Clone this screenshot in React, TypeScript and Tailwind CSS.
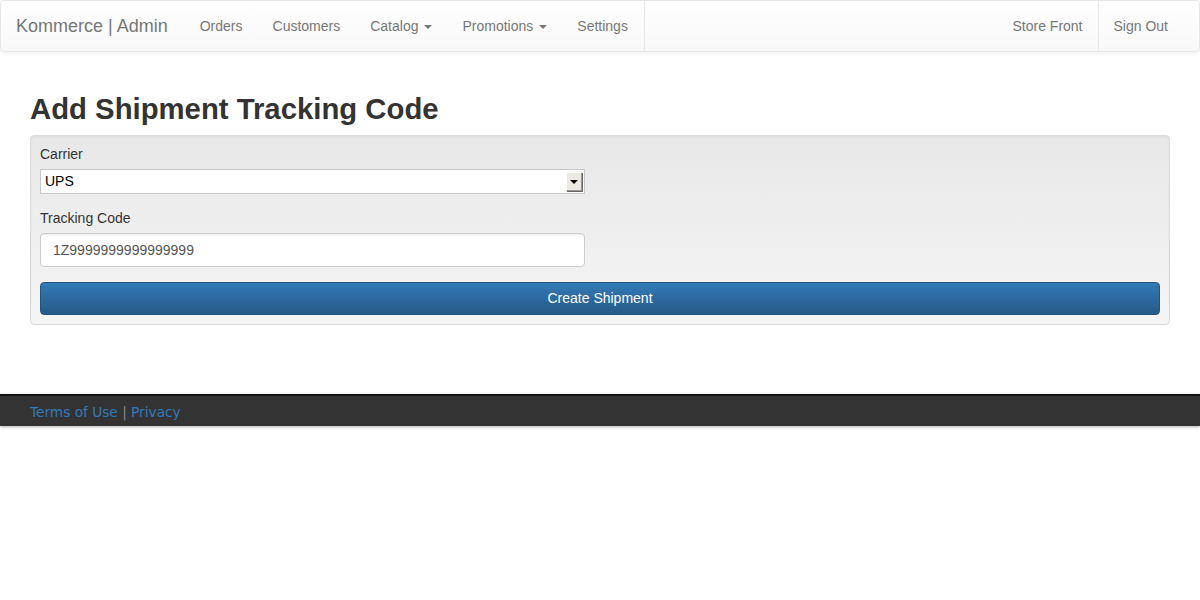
import React from "react";

const Caret = () => (
  <span className="ml-[6px] inline-block h-0 w-0 border-x-[4px] border-t-[4px] border-x-transparent border-t-[#777] align-middle" />
);

export default function App() {
  const navLink = "block px-[15px] py-[15px] leading-[20px] text-[14px] text-[#777]";
  return (
    <div className="min-h-[600px] bg-white text-[14px] text-[#333]" style={{ fontFamily: '"Liberation Sans", Arial, sans-serif' }}>
      <nav className="flex h-[52px] items-stretch rounded-[4px] border border-[#e7e7e7] bg-gradient-to-b from-white to-[#f8f8f8] shadow-[0_1px_5px_rgba(0,0,0,0.075)]">
        <a className="block pl-[15px] pr-[17px] py-[15px] text-[18px] leading-[20px] text-[#777]">Kommerce | Admin</a>
        <ul className="flex border-r border-[#e7e7e7]">
          <li><a className={navLink}>Orders</a></li>
          <li><a className={navLink}>Customers</a></li>
          <li><a className={navLink}>Catalog<Caret /></a></li>
          <li><a className={navLink}>Promotions<Caret /></a></li>
          <li><a className={`${navLink} pr-[16px]`}>Settings</a></li>
        </ul>
        <div className="flex-1" />
        <ul className="mr-[16px] flex">
          <li className="border-r border-[#e7e7e7]"><a className={navLink}>Store Front</a></li>
          <li><a className={navLink}>Sign Out</a></li>
        </ul>
      </nav>

      <div className="px-[30px]">
        <h1 className="mt-[40px] mb-[10px] text-[29.3px] font-bold leading-[33px] text-[#333]">Add Shipment Tracking Code</h1>
        <div className="rounded-[4px] border border-[#dcdcdc] bg-gradient-to-b from-[#e8e8e8] to-[#f5f5f5] px-[9px] pt-[8px] pb-[9px] shadow-[inset_0_1px_3px_rgba(0,0,0,0.05)]">
          <label className="block leading-[20px] text-[14px] text-[#333]">Carrier</label>
          <div className="mt-[5px] flex h-[25px] w-[545px] items-stretch border border-[#c8c8c8] bg-white">
            <span className="flex-1 pl-[4px] leading-[23px] text-[14px] text-black">UPS</span>
            <span className="m-[2px] flex w-[16px] items-center justify-center border border-[#999] border-l-[#fff] border-t-[#fff] bg-[#ece9e2] shadow-[1px_1px_0_#666]">
              <span className="h-0 w-0 border-x-[4px] border-t-[4px] border-x-transparent border-t-black" />
            </span>
          </div>
          <label className="mt-[14px] block leading-[20px] text-[14px] text-[#333]">Tracking Code</label>
          <div className="mt-[5px] flex h-[34px] w-[545px] items-center rounded-[4px] border border-[#ccc] bg-white px-[12px] text-[14px] text-[#555] shadow-[inset_0_1px_1px_rgba(0,0,0,0.075)]">
            1Z9999999999999999
          </div>
          <button className="mt-[15px] flex h-[33px] w-full items-center justify-center rounded-[4px] border border-[#245580] bg-gradient-to-b from-[#337ab7] to-[#265a88] text-[14px] text-white">
            Create Shipment
          </button>
        </div>
      </div>

      <footer className="mt-[69px] h-[32px] border-t-2 border-[#111] bg-[#333] px-[30px] shadow-[0_1px_3px_rgba(0,0,0,0.3)]" style={{ fontFamily: '"DejaVu Sans", Verdana, sans-serif' }}>
        <div className="pt-[6px] text-[13.7px] leading-[20px]">
          <a className="text-[#337ab7]">Terms of Use</a>
          <span className="text-[#888]"> | </span>
          <a className="text-[#337ab7]">Privacy</a>
        </div>
      </footer>
    </div>
  );
}
